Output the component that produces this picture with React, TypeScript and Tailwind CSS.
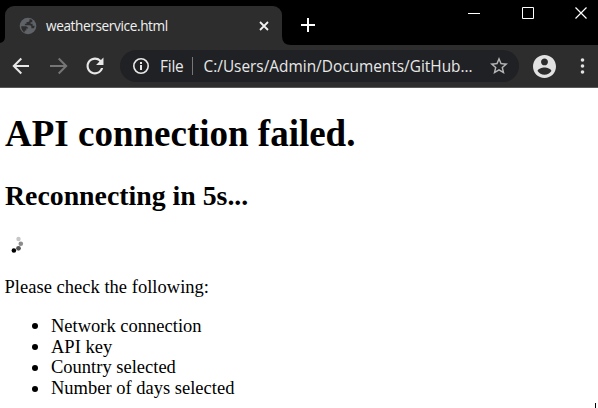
import React from "react";

function Tab() {
  return (
    <div className="relative mt-[6px] ml-[5px] flex h-[39px] w-[277px] items-center rounded-t-[9px] bg-[#2d2d2d]">
      <svg className="absolute bottom-0 -left-[5px]" width="5" height="8" viewBox="0 0 5 8">
        <path d="M5 0v8H0V6Q5 5 5 0z" fill="#2d2d2d" />
      </svg>
      <svg className="absolute -right-[9px] bottom-0" width="9" height="9" viewBox="0 0 9 9">
        <path d="M0 0v9h9Q0 9 0 0z" fill="#2d2d2d" />
      </svg>
      <svg className="ml-[14px] shrink-0" width="18" height="18" viewBox="0 0 18 18">
        <circle cx="9" cy="9" r="8.300" fill="#5f6368" />
        <path
          fill="#2d2d2d"
          d="M2.200 9.200h4.300c1.700 0 2.600 1 2.600 2.300H7.300v1.900H5.700v2.100C3.500 14.300 2.200 12 2.200 9.200zM10.500 2.200v1.300c0 .8-.6 1.400-1.400 1.400H7.500v1.800H5.900v1.600h4.800c1 0 1.700.8 1.700 1.700v1.300h2.400c.6-.9.900-1.600.900-2.600h-2.100V6.800h-2V5.200h1.700V3.100c-.7-.5-1.600-.8-2.400-.9z"
        />
      </svg>
      <span className="ml-[9px] flex-1 text-[13.6px] leading-[20px] tracking-[-0.370px] whitespace-nowrap text-[#f1f1f1]">
        weatherservice.html
      </span>
      <svg className="mr-[13px]" width="10" height="10" viewBox="0 0 10 10">
        <path d="M1 1l8 8M9 1L1 9" stroke="#f1f1f1" strokeWidth="1.8" />
      </svg>
    </div>
  );
}

function Toolbar() {
  return (
    <div className="flex h-[43px] items-center border-b border-[#5a5858] bg-[#2d2d2d]">
      <svg className="ml-[12px]" width="18" height="18" viewBox="0 0 18 18" fill="none" stroke="#e8e8e8" strokeWidth="2">
        <path d="M17 9H2.500M9.300 1.500L1.800 9l7.500 7.500" />
      </svg>
      <svg className="ml-[20px]" width="18" height="18" viewBox="0 0 18 18" fill="none" stroke="#767676" strokeWidth="2">
        <path d="M0 9h15.500M8.700 1.500l7.500 7.500-7.500 7.500" />
      </svg>
      <svg className="ml-[18px]" width="18" height="18" viewBox="3.500 3.500 17 17">
        <path
          fill="#e8e8e8"
          d="M17.650 6.350A7.958 7.958 0 0 0 12 4c-4.420 0-7.990 3.580-7.990 8s3.570 8 7.990 8c3.730 0 6.840-2.550 7.730-6h-2.080A5.990 5.990 0 0 1 12 18c-3.310 0-6-2.690-6-6s2.690-6 6-6c1.660 0 3.140.690 4.220 1.780L13 11h7V4l-2.350 2.350z"
        />
      </svg>
      <div className="ml-[16px] flex h-[32px] w-[399px] items-center rounded-full bg-[#202124] text-[15.4px] leading-[22px] whitespace-nowrap text-[#e8e8e8]">
        <svg className="ml-[13px]" width="16" height="16" viewBox="0 0 16 16">
          <circle cx="8" cy="8" r="7.200" fill="none" stroke="#e8e8e8" strokeWidth="1.600" />
          <path d="M8 7v5M8 4v2" stroke="#e8e8e8" strokeWidth="2" />
        </svg>
        <span className="mt-px ml-[11px] w-[32px] tracking-[-0.200px]">File</span>
        <span className="h-[18px] w-px bg-[#777]" />
        <span className="mt-px ml-[10.500px] w-[286.500px]">C:/Users/Admin/Documents/GitHub...</span>
        <svg width="18" height="18" viewBox="2 2 20 20">
          <path
            fill="#b5b5b5"
            d="M22 9.240l-7.190-.620L12 2 9.190 8.630 2 9.240l5.460 4.730L5.820 21 12 17.270 18.180 21l-1.630-7.030L22 9.240zM12 15.400l-3.760 2.270 1-4.280-3.320-2.880 4.380-.380L12 6.100l1.710 4.040 4.380.380-3.320 2.880 1 4.280L12 15.400z"
          />
        </svg>
      </div>
      <svg className="ml-[14px]" width="23" height="23" viewBox="2 2 20 20">
        <path
          fill="#e2e2e2"
          d="M12 2C6.480 2 2 6.480 2 12s4.480 10 10 10 10-4.480 10-10S17.520 2 12 2zm0 3c1.660 0 3 1.340 3 3s-1.340 3-3 3-3-1.340-3-3 1.340-3 3-3zm0 14.200c-2.500 0-4.710-1.280-6-3.220.030-1.990 4-3.080 6-3.080 1.990 0 5.970 1.090 6 3.080-1.290 1.940-3.500 3.220-6 3.220z"
        />
      </svg>
      <svg className="ml-[24px]" width="5" height="16" viewBox="0 0 5 16" fill="#e2e2e2">
        <circle cx="2.500" cy="2" r="1.800" />
        <circle cx="2.500" cy="8" r="1.800" />
        <circle cx="2.500" cy="14" r="1.800" />
      </svg>
    </div>
  );
}

const checks = ["Network connection", "API key", "Country selected", "Number of days selected"];

export default function App() {
  return (
    <div className="flex h-[408px] w-[598px] flex-col overflow-hidden bg-white">
      <header className="font-['Open_Sans','Noto_Sans',sans-serif]">
        <div className="flex h-[45px] bg-black">
          <Tab />
          <svg className="mt-[18px] ml-[19px]" width="14" height="14" viewBox="0 0 14 14">
            <path d="M7 0v14M0 7h14" stroke="#fff" strokeWidth="2" />
          </svg>
          <div className="mt-[7px] ml-auto flex">
            <svg width="12" height="12" viewBox="0 0 12 12">
              <path d="M0 6.500h12" stroke="#fff" />
            </svg>
            <svg className="ml-[42px]" width="12" height="12" viewBox="0 0 12 12">
              <path d="M.5.5h11v11H.5z" fill="none" stroke="#fff" />
            </svg>
            <svg className="mr-[11px] ml-[41px]" width="12" height="12" viewBox="0 0 12 12">
              <path d="M.5.5l11 11M11.500.5l-11 11" stroke="#fff" strokeWidth="1.200" />
            </svg>
          </div>
        </div>
        <Toolbar />
      </header>
      <main className="relative flex-1 pl-[5px] font-['Liberation_Serif','Times_New_Roman',serif] text-[18.5px] leading-[20.8px] text-black">
        <h1 className="mt-[25px] text-[37px] leading-[42px] font-bold">API connection failed.</h1>
        <h2 className="mt-[25px] text-[27.800px] leading-[32px] font-bold">Reconnecting in 5s...</h2>
        <svg className="mt-[24px] ml-[5px] block" width="16" height="20" viewBox="0 0 16 20">
          <circle cx="8.500" cy="3" r="2.200" fill="#c6c6c6" />
          <circle cx="10.800" cy="7.800" r="2.300" fill="#8c8c8c" />
          <circle cx="8.500" cy="12.300" r="2.400" fill="#555" />
          <circle cx="3.900" cy="14.500" r="2.300" fill="#000" />
        </svg>
        <p className="mt-[20.500px] -ml-[0.500px] tracking-[0.020px]">Please check the following:</p>
        <ul className="mt-[18.600px] pl-[27px]">
          {checks.map((c) => (
            <li key={c} className="flex items-center">
              <span className="mr-[13px] h-[6px] w-[6px] rounded-full bg-black" />
              {c}
            </li>
          ))}
        </ul>
        <span className="absolute right-[2px] bottom-0 h-[5px] w-px bg-black" />
      </main>
    </div>
  );
}
